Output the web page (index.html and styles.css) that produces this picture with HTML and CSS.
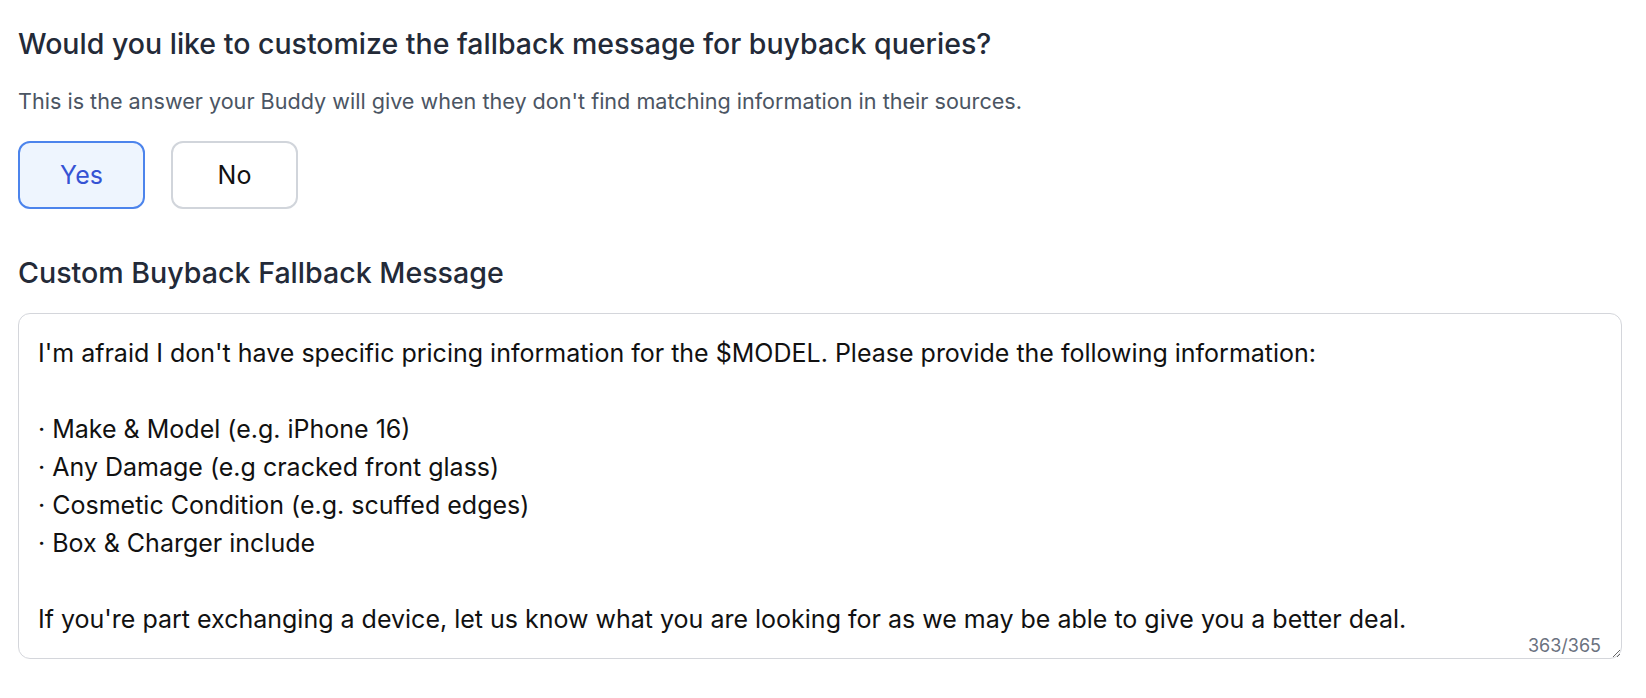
FILE: index.html
```html
<!DOCTYPE html>
<html lang="en">
<head>
<meta charset="utf-8">
<title>Fallback message</title>
<link rel="stylesheet" href="styles.css">
</head>
<body>
<main class="form">
  <h2 class="question">Would you like to customize the fallback message for buyback queries?</h2>
  <p class="hint">This is the answer your Buddy will give when they don't find matching information in their sources.</p>
  <div class="choices">
    <button class="choice choice--active" type="button">Yes</button>
    <button class="choice" type="button">No</button>
  </div>
  <label class="field-label" for="msg">Custom Buyback Fallback Message</label>
  <div class="field">
    <textarea id="msg" class="message" maxlength="365">I'm afraid I don't have specific pricing information for the $MODEL. Please provide the following information:

· Make &amp; Model (e.g. iPhone 16)
· Any Damage (e.g cracked front glass)
· Cosmetic Condition (e.g. scuffed edges)
· Box &amp; Charger include

If you're part exchanging a device, let us know what you are looking for as we may be able to give you a better deal.</textarea>
    <span class="counter">363/365</span>
  </div>
</main>
</body>
</html>
```

FILE: styles.css
```css
html, body {
  margin: 0;
  padding: 0;
  background: #ffffff;
}

body {
  font-family: Inter, "Open Sans", "Liberation Sans", sans-serif;
  color: #111111;
}

.form {
  display: flex;
  flex-direction: column;
  padding: 26px 24px 0 18px;
}

.question {
  margin: 0;
  font-size: 28.5px;
  line-height: 36px;
  font-weight: 450;
  color: #232a38;
}

.hint {
  margin: 25px 0 0;
  font-size: 21.6px;
  line-height: 28px;
  font-weight: 400;
  color: #4b5563;
}

.choices {
  display: flex;
  gap: 26px;
  margin-top: 26px;
}

.choice {
  box-sizing: border-box;
  width: 127px;
  height: 68px;
  border: 2px solid #d1d5db;
  border-radius: 12px;
  background: #ffffff;
  font-family: inherit;
  font-size: 25px;
  color: #111111;
  padding: 0;
  cursor: pointer;
}

.choice--active {
  border-color: #4c84ec;
  background: #eef5fe;
  color: #3553d4;
}

.field-label {
  display: block;
  margin-top: 46px;
  font-size: 28.6px;
  line-height: 36px;
  font-weight: 450;
  color: #232a38;
}

.field {
  position: relative;
  margin-top: 22px;
}

.message {
  display: block;
  box-sizing: border-box;
  width: 1604px;
  height: 346px;
  margin: 0;
  padding: 20px 18px 20px 19px;
  border: 1px solid #d4d6db;
  border-radius: 12px;
  font-family: inherit;
  font-size: 25px;
  line-height: 38px;
  color: #111111;
  resize: both;
  overflow: hidden;
  outline: none;
}

.counter {
  position: absolute;
  right: 21px;
  bottom: 4px;
  font-size: 18px;
  line-height: 18px;
  color: #6b7280;
}
```
